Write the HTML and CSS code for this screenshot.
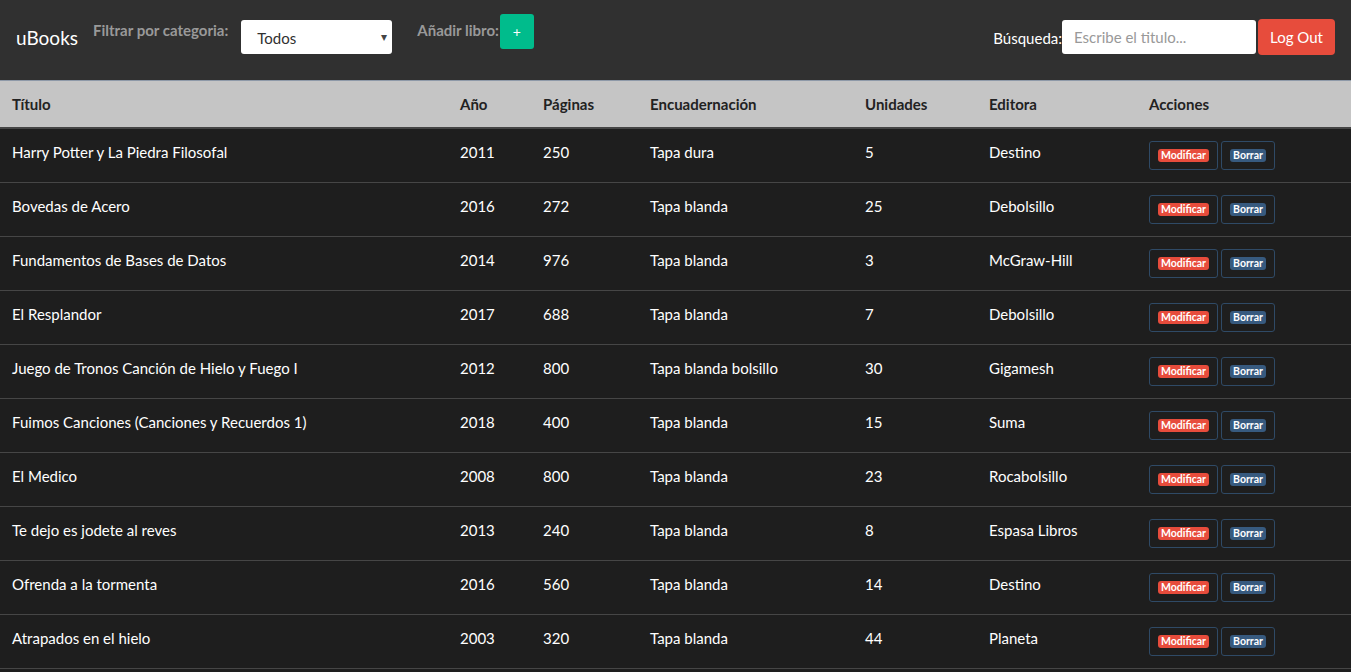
FILE: index.html
```html
<!DOCTYPE html>
<html lang="es">
<head>
<meta charset="utf-8">
<title>uBooks</title>
<link rel="stylesheet" href="styles.css">
</head>
<body>
<nav class="navbar">
  <span class="brand">uBooks</span>
  <div class="group filter">
    <label class="lbl">Filtrar por categoria:</label>
    <div class="select">Todos<span class="caret">▾</span></div>
  </div>
  <div class="group add">
    <label class="lbl">Añadir libro:</label>
    <button class="btn-add">+</button>
  </div>
  <div class="spacer"></div>
  <div class="group search">
    <label class="lbl-light">Búsqueda:</label>
    <div class="input">Escribe el titulo...</div>
    <button class="btn-logout">Log Out</button>
  </div>
</nav>
<table class="books">
  <thead>
    <tr>
      <th class="c1">Título</th><th class="c2">Año</th><th class="c3">Páginas</th><th class="c4">Encuadernación</th><th class="c5">Unidades</th><th class="c6">Editora</th><th class="c7">Acciones</th>
    </tr>
  </thead>
  <tbody>
    <tr><td>Harry Potter y La Piedra Filosofal</td><td>2011</td><td>250</td><td>Tapa dura</td><td>5</td><td>Destino</td><td><div class="acts"><span class="ab"><span class="badge red">Modificar</span></span><span class="ab"><span class="badge blue">Borrar</span></span></div></td></tr>
    <tr><td>Bovedas de Acero</td><td>2016</td><td>272</td><td>Tapa blanda</td><td>25</td><td>Debolsillo</td><td><div class="acts"><span class="ab"><span class="badge red">Modificar</span></span><span class="ab"><span class="badge blue">Borrar</span></span></div></td></tr>
    <tr><td>Fundamentos de Bases de Datos</td><td>2014</td><td>976</td><td>Tapa blanda</td><td>3</td><td>McGraw-Hill</td><td><div class="acts"><span class="ab"><span class="badge red">Modificar</span></span><span class="ab"><span class="badge blue">Borrar</span></span></div></td></tr>
    <tr><td>El Resplandor</td><td>2017</td><td>688</td><td>Tapa blanda</td><td>7</td><td>Debolsillo</td><td><div class="acts"><span class="ab"><span class="badge red">Modificar</span></span><span class="ab"><span class="badge blue">Borrar</span></span></div></td></tr>
    <tr><td>Juego de Tronos Canción de Hielo y Fuego I</td><td>2012</td><td>800</td><td>Tapa blanda bolsillo</td><td>30</td><td>Gigamesh</td><td><div class="acts"><span class="ab"><span class="badge red">Modificar</span></span><span class="ab"><span class="badge blue">Borrar</span></span></div></td></tr>
    <tr><td>Fuimos Canciones (Canciones y Recuerdos 1)</td><td>2018</td><td>400</td><td>Tapa blanda</td><td>15</td><td>Suma</td><td><div class="acts"><span class="ab"><span class="badge red">Modificar</span></span><span class="ab"><span class="badge blue">Borrar</span></span></div></td></tr>
    <tr><td>El Medico</td><td>2008</td><td>800</td><td>Tapa blanda</td><td>23</td><td>Rocabolsillo</td><td><div class="acts"><span class="ab"><span class="badge red">Modificar</span></span><span class="ab"><span class="badge blue">Borrar</span></span></div></td></tr>
    <tr><td>Te dejo es jodete al reves</td><td>2013</td><td>240</td><td>Tapa blanda</td><td>8</td><td>Espasa Libros</td><td><div class="acts"><span class="ab"><span class="badge red">Modificar</span></span><span class="ab"><span class="badge blue">Borrar</span></span></div></td></tr>
    <tr><td>Ofrenda a la tormenta</td><td>2016</td><td>560</td><td>Tapa blanda</td><td>14</td><td>Destino</td><td><div class="acts"><span class="ab"><span class="badge red">Modificar</span></span><span class="ab"><span class="badge blue">Borrar</span></span></div></td></tr>
    <tr><td>Atrapados en el hielo</td><td>2003</td><td>320</td><td>Tapa blanda</td><td>44</td><td>Planeta</td><td><div class="acts"><span class="ab"><span class="badge red">Modificar</span></span><span class="ab"><span class="badge blue">Borrar</span></span></div></td></tr>
  </tbody>
</table>
</body>
</html>
```

FILE: styles.css
```css
* { box-sizing: border-box; }
html, body { margin: 0; padding: 0; }
body {
  background: #1e1e1e;
  font-family: Lato, "Liberation Sans", sans-serif;
  font-size: 15px;
  color: #ffffff;
  overflow: hidden;
}
.navbar {
  height: 80px;
  background: #303030;
  display: flex;
  align-items: flex-start;
  padding: 0 16px;
}
.brand {
  font-size: 19px;
  color: #ffffff;
  margin-top: 26px;
  line-height: 24px;
  margin-right: 15px;
}
.group { display: flex; align-items: flex-start; }
.lbl {
  font-weight: bold;
  color: #999999;
  line-height: 20px;
  margin-top: 20px;
}
.filter .lbl { margin-right: 13px; }
.select {
  margin-top: 20px;
  width: 151px;
  height: 34px;
  background: #fff;
  border-radius: 3px;
  color: #303030;
  padding: 0 16px;
  line-height: 36px;
  position: relative;
}
.caret {
  position: absolute;
  right: 5px;
  top: 0;
  font-size: 12px;
  line-height: 34px;
  color: #444;
}
.add { margin-left: 25px; }
.btn-add {
  margin-top: 14px;
  margin-left: 1px;
  width: 34px;
  height: 35px;
  border: none;
  border-radius: 3px;
  background: #00bc8c;
  color: #fff;
  font-family: Lato, sans-serif;
  font-size: 14px;
  padding: 0;
}
.spacer { flex: 1; }
.lbl-light {
  color: #fff;
  margin-top: 27px;
  line-height: 22px;
}
.input {
  margin-top: 20px;
  width: 194px;
  height: 34px;
  background: #fff;
  border-radius: 3px;
  color: #999;
  font-size: 15px;
  padding: 0 12px;
  line-height: 35px;
}
.btn-logout {
  margin-top: 19px;
  margin-left: 2px;
  width: 77px;
  height: 36px;
  border: none;
  border-radius: 4px;
  background: #e74c3c;
  color: #fff;
  font-family: Lato, sans-serif;
  font-size: 15px;
  padding: 0;
}
.books {
  width: 100%;
  border-collapse: separate;
  border-spacing: 0;
  table-layout: fixed;
}
.books th {
  background: #c5c5c5;
  border-top: 1px solid #8e99a8;
  border-bottom: 2px solid #464646;
  text-align: left;
  color: #222;
  font-weight: bold;
  height: 49px;
  padding: 12px 12px 0;
  line-height: 22px;
  vertical-align: top;
}
.c1 { width: 448px; }
.c2 { width: 83px; }
.c3 { width: 107px; }
.c4 { width: 215px; }
.c5 { width: 124px; }
.c6 { width: 160px; }
.books td {
  height: 54px;
  padding: 12px 12px 0;
  line-height: 22px;
  vertical-align: top;
  border-bottom: 1px solid #464646;
  color: #fff;
}
.acts { display: flex; gap: 3px; }
.ab {
  display: flex;
  align-items: center;
  justify-content: center;
  height: 29px;
  border: 1px solid #2f4a66;
  border-radius: 3px;
}
.ab:first-child { width: 69px; }
.ab:last-child { width: 54px; }
.badge {
  font-size: 10.5px;
  font-weight: bold;
  color: #fff;
  line-height: 13px;
  height: 13px;
  padding: 0 3px;
  border-radius: 3px;
}
.red { background: #e74c3c; }
.blue { background: #375a7f; }
```
